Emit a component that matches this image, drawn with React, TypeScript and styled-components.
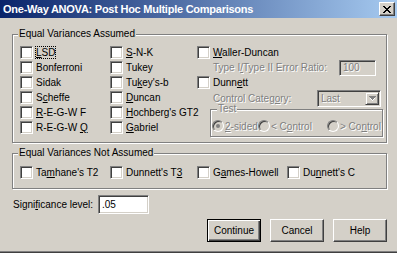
import React from 'react';
import styled, { createGlobalStyle, css } from 'styled-components';

const GlobalStyle = createGlobalStyle`
  html, body {
    margin: 0;
    padding: 0;
    background: #d4d0c8;
  }
  body {
    font-family: 'Liberation Sans', Arial, sans-serif;
    font-size: 10px;
    color: #000;
  }
`;

/** dialog frame */
const Window = styled.div`
  width: 397px;
  height: 253px;
  box-sizing: border-box;
  display: flex;
  flex-direction: column;
  background: #d4d0c8;
  border-bottom: 1px solid #404040;
  box-shadow: inset 0 -1px 0 #808080;
  overflow: hidden;
`;

const TitleBar = styled.div`
  flex: none;
  height: 18px;
  display: flex;
  align-items: center;
  justify-content: space-between;
  padding: 0 2px 0 3px;
  background: linear-gradient(to right, #0a246a, #a6caf0);
`;

const Title = styled.span`
  color: #fff;
  font-weight: bold;
  font-size: 11px;
  letter-spacing: -0.25px;
  white-space: nowrap;
`;

const CloseButton = styled.div`
  width: 16px;
  height: 14px;
  box-sizing: border-box;
  display: flex;
  align-items: center;
  justify-content: center;
  background: #d4d0c8;
  border: 1px solid;
  border-color: #fff #404040 #404040 #fff;
  box-shadow: inset -1px -1px 0 #808080;
`;

const Body = styled.div`
  display: flex;
  flex-direction: column;
  padding: 10px 10px 0 12px;
`;

/** etched group box */
const Group = styled.fieldset<{ $pt: number; $pb: number }>`
  margin: 0;
  min-width: 0;
  padding: ${(p) => p.$pt}px 3px ${(p) => p.$pb}px 7px;
  border: 1px solid #808080;
  box-shadow: inset 1px 1px 0 #fff, 1px 1px 0 #fff;
`;

const Legend = styled.legend<{ $disabled?: boolean; $indent?: number }>`
  margin-left: ${(p) => p.$indent ?? -2}px;
  padding: 0 1px;
  line-height: 12px;
  background: #d4d0c8;
  ${(p) =>
    p.$disabled &&
    css`
      color: #808080;
      text-shadow: 1px 1px 0 #fff;
    `}
`;

const Columns = styled.div<{ $cols: string }>`
  display: grid;
  grid-template-columns: ${(p) => p.$cols};
`;

const Stack = styled.div`
  display: flex;
  flex-direction: column;
`;

const CheckRow = styled.div`
  display: flex;
  align-items: center;
  gap: 3px;
  height: 15px;
  white-space: nowrap;
`;

const Box = styled.span<{ $disabled?: boolean }>`
  flex: none;
  width: 13px;
  height: 13px;
  box-sizing: border-box;
  background: ${(p) => (p.$disabled ? '#d4d0c8' : '#fff')};
  border: 1px solid;
  border-color: #808080 #fff #fff #808080;
  box-shadow: inset 1px 1px 0 #404040, inset -1px -1px 0 #d4d0c8;
`;

const Caption = styled.span<{ $disabled?: boolean; $focus?: boolean; $w?: number }>`
  line-height: 11px;
  white-space: nowrap;
  ${(p) => p.$w && css`width: ${p.$w}px;`}
  ${(p) =>
    p.$disabled &&
    css`
      color: #808080;
      text-shadow: 1px 1px 0 #fff;
    `}
  ${(p) =>
    p.$focus &&
    css`
      border: 1px dotted #000;
      margin-left: -1px;
    `}
`;

const Key = styled.span`
  text-decoration: underline;
  text-underline-offset: 1px;
`;

const FieldRow = styled.div<{ $h: number }>`
  display: flex;
  align-items: center;
  height: ${(p) => p.$h}px;
  padding-left: 16px;
`;

const Field = styled.div<{ $w: number; $h: number; $disabled?: boolean }>`
  flex: none;
  width: ${(p) => p.$w}px;
  height: ${(p) => p.$h}px;
  box-sizing: border-box;
  display: flex;
  align-items: center;
  padding-left: 3px;
  background: ${(p) => (p.$disabled ? '#d4d0c8' : '#fff')};
  color: ${(p) => (p.$disabled ? '#808080' : '#000')};
  border: 1px solid;
  border-color: #808080 #fff #fff #808080;
  box-shadow: inset 1px 1px 0 #404040, inset -1px -1px 0 #d4d0c8;
`;

const DropText = styled.span`
  flex: 1;
  text-shadow: 1px 1px 0 #fff;
`;

const ArrowButton = styled.span`
  flex: none;
  width: 14px;
  height: 13px;
  margin-right: 1px;
  box-sizing: border-box;
  display: flex;
  align-items: center;
  justify-content: center;
  background: #d4d0c8;
  border: 1px solid;
  border-color: #d4d0c8 #404040 #404040 #d4d0c8;
  box-shadow: inset 1px 1px 0 #fff, inset -1px -1px 0 #808080;
`;

const TestGroup = styled(Group)`
  margin: -3px 0 0 13px;
  padding: 5px 0 4px 1px;
`;

const RadioRow = styled.div`
  display: flex;
  align-items: center;
  height: 12px;
`;

const RadioItem = styled.div<{ $w?: number }>`
  display: flex;
  align-items: center;
  gap: 1px;
  ${(p) => (p.$w ? css`width: ${p.$w}px;` : css`flex: 1;`)}
`;

const Radio = styled.span<{ $checked?: boolean }>`
  flex: none;
  width: 12px;
  height: 12px;
  box-sizing: border-box;
  border-radius: 50%;
  display: flex;
  align-items: center;
  justify-content: center;
  background: #d4d0c8;
  border: 1px solid;
  border-color: #808080 #fff #fff #808080;
  box-shadow: inset 1px 1px 0 #404040;
  &::after {
    content: '';
    display: ${(p) => (p.$checked ? 'block' : 'none')};
    width: 4px;
    height: 4px;
    border-radius: 50%;
    background: #808080;
  }
`;

const SigRow = styled.div`
  display: flex;
  align-items: center;
  margin-top: 6px;
  padding-left: 1px;
`;

const ButtonRow = styled.div`
  display: flex;
  justify-content: flex-end;
  gap: 9px;
  margin-top: 5px;
`;

const Button = styled.div<{ $default?: boolean }>`
  width: 54px;
  height: 23px;
  box-sizing: border-box;
  display: flex;
  align-items: center;
  justify-content: center;
  background: #d4d0c8;
  border: 1px solid;
  border-color: #fff #404040 #404040 #fff;
  box-shadow: inset -1px -1px 0 #808080;
  ${(p) =>
    p.$default &&
    css`
      border-color: #000;
      box-shadow: inset 1px 1px 0 #fff, inset -1px -1px 0 #404040, inset -2px -2px 0 #808080;
    `}
`;

type Option = { label: string; at: number; focus?: boolean };

/** text with the access key underlined */
const Mnemonic = ({ text, at }: { text: string; at: number }) => {
  if (at < 0) return <>{text}</>;
  return (
    <>
      {text.slice(0, at)}
      <Key>{text[at]}</Key>
      {text.slice(at + 1)}
    </>
  );
};

const Check = ({ label, at, focus }: Option) => (
  <CheckRow>
    <Box />
    <Caption $focus={focus}>
      <Mnemonic text={label} at={at} />
    </Caption>
  </CheckRow>
);

const col1: Option[] = [
  { label: 'LSD', at: 0, focus: true },
  { label: 'Bonferroni', at: -1 },
  { label: 'Sidak', at: -1 },
  { label: 'Scheffe', at: 1 },
  { label: 'R-E-G-W F', at: 0 },
  { label: 'R-E-G-W Q', at: 8 },
];

const col2: Option[] = [
  { label: 'S-N-K', at: 0 },
  { label: 'Tukey', at: -1 },
  { label: "Tukey's-b", at: 2 },
  { label: 'Duncan', at: 0 },
  { label: "Hochberg's GT2", at: 0 },
  { label: 'Gabriel', at: 0 },
];

const notAssumed: Option[] = [
  { label: "Tamhane's T2", at: 2 },
  { label: "Dunnett's T3", at: 11 },
  { label: 'Games-Howell', at: 1 },
  { label: "Dunnett's C", at: 2 },
];

const CloseGlyph = () => (
  <svg width="8" height="7" viewBox="0 0 8 7" shapeRendering="crispEdges">
    <path
      d="M0 0h2v1H0zM6 0h2v1H6zM1 1h2v1H1zM5 1h2v1H5zM2 2h4v1H2zM3 3h2v1H3zM2 4h4v1H2zM1 5h2v1H1zM5 5h2v1H5zM0 6h2v1H0zM6 6h2v1H6z"
      fill="#000"
    />
  </svg>
);

const DownArrow = () => (
  <svg width="7" height="5" viewBox="0 0 7 5" shapeRendering="crispEdges">
    <path d="M1 2h5v1H1zM2 3h3v1H2zM3 4h1v1H3z" fill="#fff" />
    <path d="M0 0h7v1H0zM1 1h5v1H1zM2 2h3v1H2zM3 3h1v1H3z" fill="#808080" />
  </svg>
);

const App = () => (
  <>
    <GlobalStyle />
    <Window>
      <TitleBar>
        <Title>One-Way ANOVA: Post Hoc Multiple Comparisons</Title>
        <CloseButton>
          <CloseGlyph />
        </CloseButton>
      </TitleBar>
      <Body>
        <Group $pt={5} $pb={5}>
          <Legend>Equal Variances Assumed</Legend>
          <Columns $cols="90px 87px 1fr">
            <Stack>
              {col1.map((o) => (
                <Check key={o.label} {...o} />
              ))}
            </Stack>
            <Stack>
              {col2.map((o) => (
                <Check key={o.label} {...o} />
              ))}
            </Stack>
            <Stack>
              <Check label="Waller-Duncan" at={0} />
              <FieldRow $h={15}>
                <Caption $disabled $w={126}>
                  <Mnemonic text="Type I/Type II Error Ratio:" at={6} />
                </Caption>
                <Field $w={37} $h={16} $disabled>
                  <DropText>100</DropText>
                </Field>
              </FieldRow>
              <Check label="Dunnett" at={4} />
              <FieldRow $h={16}>
                <Caption $disabled $w={104}>
                  <Mnemonic text="Control Category:" at={13} />
                </Caption>
                <Field $w={64} $h={17} $disabled>
                  <DropText>Last</DropText>
                  <ArrowButton>
                    <DownArrow />
                  </ArrowButton>
                </Field>
              </FieldRow>
              <TestGroup $pt={5} $pb={4}>
                <Legend $disabled $indent={5}>
                  Test
                </Legend>
                <RadioRow>
                  <RadioItem $w={46}>
                    <Radio $checked />
                    <Caption $disabled>
                      <Mnemonic text="2-sided" at={0} />
                    </Caption>
                  </RadioItem>
                  <RadioItem $w={69}>
                    <Radio />
                    <Caption $disabled>
                      <Mnemonic text="< Control" at={3} />
                    </Caption>
                  </RadioItem>
                  <RadioItem>
                    <Radio />
                    <Caption $disabled>
                      <Mnemonic text="> Control" at={4} />
                    </Caption>
                  </RadioItem>
                </RadioRow>
              </TestGroup>
            </Stack>
          </Columns>
        </Group>

        <Group $pt={6} $pb={8} style={{ marginTop: 4 }}>
          <Legend>Equal Variances Not Assumed</Legend>
          <Columns $cols="90px 87px 90px 1fr">
            {notAssumed.map((o) => (
              <Check key={o.label} {...o} />
            ))}
          </Columns>
        </Group>

        <SigRow>
          <Caption $w={85}>
            <Mnemonic text="Significance level:" at={5} />
          </Caption>
          <Field $w={51} $h={19}>
            .05
          </Field>
        </SigRow>

        <ButtonRow>
          <Button $default>Continue</Button>
          <Button>Cancel</Button>
          <Button>Help</Button>
        </ButtonRow>
      </Body>
    </Window>
  </>
);

export default App;
